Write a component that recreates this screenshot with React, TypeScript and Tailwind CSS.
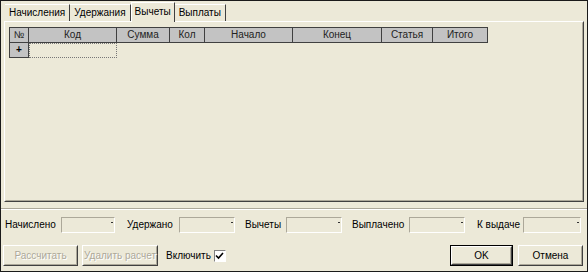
import React from 'react';

const tabs = ['Начисления', 'Удержания', 'Вычеты', 'Выплаты'];

const columns = [
  { title: '№', w: 'w-[19px]' },
  { title: 'Код', w: 'w-[88px]' },
  { title: 'Сумма', w: 'w-[53px]' },
  { title: 'Кол', w: 'w-[35px]' },
  { title: 'Начало', w: 'w-[88px]' },
  { title: 'Конец', w: 'w-[89px]' },
  { title: 'Статья', w: 'w-[51px]' },
  { title: 'Итого', w: 'w-[55px]' },
];

// label width includes the space before the input, gap is the space after the input
const totals = [
  { label: 'Начислено', lw: 'w-[56px]', iw: 'w-[54px]', gap: 'mr-[12px]' },
  { label: 'Удержано', lw: 'w-[52px]', iw: 'w-[56px]', gap: 'mr-[10px]' },
  { label: 'Вычеты', lw: 'w-[41px]', iw: 'w-[56px]', gap: 'mr-[10px]' },
  { label: 'Выплачено', lw: 'w-[57px]', iw: 'w-[56px]', gap: 'mr-[12px]' },
  { label: 'К выдаче', lw: 'w-[46px]', iw: 'w-[58px]', gap: '' },
];

function Field({ w }: { w: string }) {
  return (
    <div
      className={`${w} h-[16px] shrink-0 relative border border-t-[#aca899] border-l-[#aca899] border-r-white border-b-white bg-[#ECE9D8]`}
    >
      <span className="absolute right-[1px] top-[4px] w-[2px] h-[1px] bg-[#333]" />
    </div>
  );
}

function Button({ label, disabled, main, w }: { label: string; disabled?: boolean; main?: boolean; w: string }) {
  return (
    <div className={`${w} h-[21px] shrink-0 ${main ? 'border border-black' : ''}`}>
      <div className="h-full border border-t-white border-l-white border-r-[#404040] border-b-[#404040]">
        <div className="h-full flex items-center justify-center border border-t-[#ECE9D8] border-l-[#ECE9D8] border-r-[#aca899] border-b-[#aca899]">
          <span
            className={
              disabled
                ? 'whitespace-nowrap text-[#aca899] [text-shadow:1px_1px_0_#ffffff]'
                : 'whitespace-nowrap text-black'
            }
          >
            {label}
          </span>
        </div>
      </div>
    </div>
  );
}

export default function App() {
  return (
    <div className="w-[588px] h-[272px] border border-[#1a1a1a] bg-[#ECE9D8] text-[10px] leading-none text-black font-['Liberation_Sans',Arial,sans-serif] flex flex-col">
      {/* Tabs */}
      <div className="h-[20px] pl-[4px] flex items-end relative z-10">
        {tabs.map((t) => {
          const active = t === 'Вычеты';
          return active ? (
            <div
              key={t}
              className="h-[20px] -mb-px px-[3px] pb-[2px] flex items-center bg-[#ECE9D8] border-t border-l border-r border-t-white border-l-white border-r-[#404040]"
            >
              {t}
            </div>
          ) : (
            <div
              key={t}
              className="h-[17px] px-[4px] flex items-center border-r border-r-[#404040] border-t border-t-white"
            >
              {t}
            </div>
          );
        })}
      </div>

      {/* Tab panel */}
      <div className="mx-[3px] h-[181px] border border-t-white border-l-white border-r-[#404040] border-b-[#404040]">
        <div className="h-full border border-t-[#ECE9D8] border-l-[#ECE9D8] border-r-[#aca899] border-b-[#aca899] pt-[4px] pl-[3px]">
          <div className="w-fit border-l border-t border-[#404040]">
            <div className="flex h-[15px]">
              {columns.map((c) => (
                <div
                  key={c.title}
                  className={`${c.w} h-full bg-[#c3c3c3] border-r border-b border-[#404040] flex items-center justify-center text-[#222]`}
                >
                  {c.title}
                </div>
              ))}
            </div>
            <div className="flex h-[15px]">
              <div className="w-[19px] h-full bg-[#c3c3c3] border-r border-b border-[#404040] flex items-center justify-center font-bold">
                +
              </div>
              <div className="w-[88px] h-full border border-dotted border-[#777]" />
            </div>
          </div>
        </div>
      </div>

      {/* Separator */}
      <div className="mt-[6px] border-t border-t-[#aca899] border-b border-b-white" />

      {/* Totals */}
      <div className="mt-[7px] pl-[4px] flex items-center h-[16px]">
        {totals.map((f) => (
          <div key={f.label} className={`flex items-center shrink-0 ${f.gap}`}>
            <span className={`${f.lw} shrink-0 whitespace-nowrap`}>{f.label}</span>
            <Field w={f.iw} />
          </div>
        ))}
      </div>

      {/* Buttons */}
      <div className="mt-[12px] pl-[2px] flex items-center">
        <Button label="Рассчитать" disabled w="w-[75px]" />
        <div className="ml-[4px]">
          <Button label="Удалить расчет" disabled w="w-[76px]" />
        </div>
        <span className="ml-[8px] whitespace-nowrap">Включить</span>
        <div className="ml-[3px] w-[12px] h-[12px] bg-white border border-t-[#808080] border-l-[#808080] border-r-white border-b-white flex items-center justify-center">
          <svg width="9" height="8" viewBox="0 0 9 8">
            <path d="M1 3.5 L3.5 6 L8 1" stroke="#000" strokeWidth="1.6" fill="none" />
          </svg>
        </div>
        <div className="ml-auto flex gap-[5px] mr-[4px]">
          <Button label="OK" main w="w-[63px]" />
          <Button label="Отмена" w="w-[65px]" />
        </div>
      </div>
    </div>
  );
}
